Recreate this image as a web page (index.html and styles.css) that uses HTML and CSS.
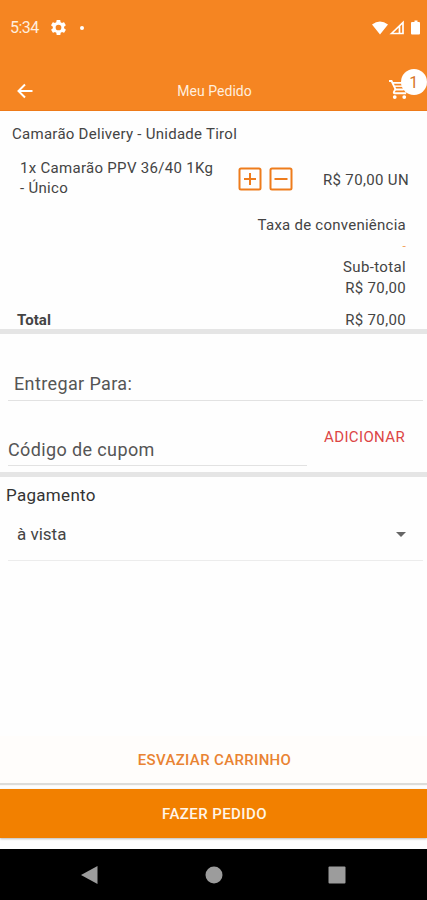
FILE: index.html
```html
<!DOCTYPE html>
<html lang="pt-BR">
<head>
<meta charset="utf-8">
<title>Meu Pedido</title>
<link rel="stylesheet" href="styles.css">
</head>
<body>
<header class="header">
  <div class="status">
    <span class="clock">5:34</span>
    <svg class="gear" viewBox="2 2 20 20"><path fill="#fff" fill-rule="evenodd" d="M19.400 13a7.500 7.500 0 0 0 0-2l2.100-1.600c.2-.2.2-.4.1-.6l-2-3.500c-.1-.2-.4-.3-.6-.2l-2.500 1a7.300 7.300 0 0 0-1.700-1l-.4-2.600c0-.3-.2-.5-.5-.5h-4c-.2 0-.4.2-.5.5L9 5.100a8 8 0 0 0-1.700 1l-2.500-1c-.2-.1-.5 0-.6.200l-2 3.500c-.1.200-.1.500.1.600L4.500 11a8 8 0 0 0 0 2l-2.100 1.600c-.2.200-.2.400-.1.600l2 3.500c.1.200.4.300.6.200l2.500-1c.5.400 1.100.7 1.700 1l.4 2.600c0 .3.300.5.500.5h4c.3 0 .5-.2.500-.5l.4-2.600c.6-.3 1.200-.6 1.700-1l2.500 1c.2.100.5 0 .6-.2l2-3.500c.1-.2.1-.5-.1-.6zM12 15.800a3.800 3.800 0 1 1 0-7.600 3.800 3.800 0 0 1 0 7.600z"/></svg>
    <i class="notice"></i>
    <svg class="signals" viewBox="0 0 50 16"><path fill="#fff" d="M0 4.500Q8-1.500 16 4.500L8 14.500ZM40.500 2h2V.5h3V2h1.500q1 0 1 1v10.500q0 1-1 1h-7q-1 0-1-1V3q0-1 1-1z"/><path fill="none" stroke="#fff" stroke-width="1.700" d="M19.500 13.500 31 2.500v11zM27.500 6v7"/></svg>
  </div>
  <div class="toolbar">
    <svg class="back" viewBox="0 0 16 16"><path fill="none" stroke="#fff" stroke-width="2" d="M15.500 8H2M8 1.500 1.500 8 8 14.500"/></svg>
    <h1 class="title">Meu Pedido</h1>
    <div class="cart">
      <svg class="cart-icon" viewBox="1 2 22 20"><path fill="#fff" d="M15.550 13c.75 0 1.410-.41 1.750-1.030l3.580-6.490A1 1 0 0 0 20.010 4H5.210l-.94-2H1v2h2l3.600 7.590-1.350 2.440C4.520 15.370 5.480 17 7 17h12v-2H7l1.100-2zM6.160 6h12.150l-2.760 5H8.530zM7 18a2 2 0 1 0 0 4 2 2 0 0 0 0-4zm10 0a2 2 0 1 0 0 4 2 2 0 0 0 0-4z"/><path stroke="#fff" stroke-width="1.500" d="M7 8.500h11"/></svg>
      <span class="badge">1</span>
    </div>
  </div>
</header>
<main class="content">
  <section class="order">
    <h2 class="store">Camarão Delivery - Unidade Tirol</h2>
    <div class="item">
      <p class="item-name">1x Camarão PPV 36/40 1Kg<br>- Único</p>
      <svg class="step" viewBox="0 0 24 24"><path fill="none" stroke="#ee7c1c" stroke-width="2" d="M3 1.500h18q1.500 0 1.500 1.500v18q0 1.500-1.500 1.500H3Q1.500 22.500 1.500 21V3Q1.500 1.500 3 1.500zM12 6v12M6 12h12"/></svg>
      <svg class="step" viewBox="0 0 24 24"><path fill="none" stroke="#ee7c1c" stroke-width="2" d="M3 1.500h18q1.500 0 1.500 1.500v18q0 1.500-1.500 1.500H3Q1.500 22.500 1.500 21V3Q1.500 1.500 3 1.500zM5.500 12h13"/></svg>
      <span class="price">R$ 70,00 UN</span>
    </div>
    <div class="fee"><span>Taxa de conveniência</span><span class="fee-value">-</span></div>
    <div class="subtotal"><span>Sub-total</span><span>R$ 70,00</span></div>
    <div class="total"><strong>Total</strong><span>R$ 70,00</span></div>
  </section>
  <section class="delivery">
    <div class="field address">Entregar Para:</div>
    <div class="coupon">
      <div class="field code">Código de cupom</div>
      <span class="add">ADICIONAR</span>
    </div>
  </section>
  <section class="payment">
    <h2 class="pay-title">Pagamento</h2>
    <div class="select"><span>à vista</span><i class="caret"></i></div>
  </section>
</main>
<footer class="actions">
  <div class="button empty">ESVAZIAR CARRINHO</div>
  <div class="button submit">FAZER PEDIDO</div>
</footer>
<nav class="nav">
  <svg viewBox="0 0 18 18"><path fill="#9c9c9c" d="M16.500 0v18L0 9z"/></svg>
  <svg viewBox="0 0 18 18"><circle cx="9" cy="9" r="8.500" fill="#9c9c9c"/></svg>
  <svg viewBox="0 0 18 18"><rect x=".5" y=".5" width="17" height="17" rx="1" fill="#9c9c9c"/></svg>
</nav>
</body>
</html>
```
FILE: styles.css
```css
* { box-sizing: border-box; }
body {
  margin: 0;
  height: 900px;
  display: flex;
  flex-direction: column;
  background: #fefefe;
  color: #444;
  font: 400 15px/20px Roboto, sans-serif;
  letter-spacing: .3px;
  overflow: hidden;
}
h1, h2, p { margin: 0; font-weight: 400; }
svg { display: block; flex: none; }
.header { height: 111px; background: #f58522; color: #fff; border-bottom: 1px solid #ee7a18; }
.status { height: 55px; display: flex; align-items: center; padding: 0 4px 0 10px; }
.clock { font-size: 16px; width: 41px; color: #ffeede; letter-spacing: -.5px; padding-top: 1px; }
.gear { width: 15px; height: 15px; }
.notice { width: 4px; height: 4px; border-radius: 50%; background: #fff; margin-left: 14px; }
.signals { width: 50px; height: 16px; margin-left: auto; margin-right: 1px; }
.toolbar { margin-top: 15px; height: 41px; display: flex; align-items: center; justify-content: space-between; padding-left: 17px; }
.back { width: 16px; height: 16px; }
.title { font-size: 14px; letter-spacing: .05px; margin-left: 7px; color: #ffeede; }
.cart { position: relative; width: 38px; height: 41px; padding-top: 10px; }
.cart-icon { width: 21px; height: 19px; }
.badge { position: absolute; left: 12px; top: -1px; width: 26px; height: 26px; border-radius: 50%; background: #fff; color: #d87426; text-align: center; font-size: 16px; line-height: 27px; }
.order { height: 223px; border-bottom: 5px solid #e5e5e5; }
.store { height: 46px; padding: 13px 12px 0; font-size: 15px; letter-spacing: .27px; }
.item { height: 44px; display: flex; align-items: center; padding: 0 18px 0 20px; }
.item-name { width: 218px; line-height: 20px; margin-top: -2px; }
.step { width: 24px; height: 24px; margin-right: 7px; }
.price { margin-left: auto; letter-spacing: .35px; padding-top: 1px; }
.fee { height: 55px; padding: 14px 21px 0 0; display: flex; flex-direction: column; align-items: flex-end; letter-spacing: .25px; }
.fee-value { color: #f3a563; font-size: 12px; padding-top: 1px; }
.subtotal { height: 42px; padding: 1px 21px 0 0; display: flex; flex-direction: column; align-items: flex-end; line-height: 21px; letter-spacing: .35px; }
.total { margin-top: 10px; height: 21px; padding: 1px 21px 0 17px; display: flex; justify-content: space-between; line-height: 22px; letter-spacing: .35px; }
.total strong { font-weight: 700; letter-spacing: .1px; }
.delivery { height: 143px; padding: 38px 4px 0 8px; border-bottom: 5px solid #e5e5e5; }
.field { font-size: 18px; border-bottom: 1px solid #e2e2e2; color: #555; letter-spacing: .38px; }
.address { height: 29px; padding-left: 6px; line-height: 24px; }
.coupon { display: flex; justify-content: space-between; height: 65px; }
.code { width: 299px; padding-top: 36px; line-height: 26px; }
.add { padding: 26px 18px 0 0; color: #dc4545; letter-spacing: .35px; }
.payment { padding: 8px 4px 0 6px; }
.pay-title { font-size: 17px; color: #333; }
.select { margin-left: 2px; height: 56px; border-bottom: 1px solid #ececec; padding: 19px 17px 0 9px; display: flex; justify-content: space-between; font-size: 17px; letter-spacing: 0; }
.caret { border: 5px solid transparent; border-top-color: #666; border-bottom: 0; width: 0; height: 5px; margin-top: 8px; }
.actions { margin-top: auto; height: 113px; }
.button { display: flex; justify-content: center; align-items: center; padding-left: 2px; }
.empty { height: 47px; background: #fffdfb; color: #e98332; box-shadow: 0 2px 1px #dcdcda; font-weight: 500; letter-spacing: .35px; }
.submit { margin-top: 6px; height: 49px; background: #f28000; color: #fff5e8; box-shadow: 0 1px 2px #b9b9b9; font-weight: 500; letter-spacing: .42px; }
.nav { height: 51px; background: #000; display: flex; align-items: center; padding: 0 81px; justify-content: space-between; }
.nav svg { width: 18px; height: 18px; }
```
